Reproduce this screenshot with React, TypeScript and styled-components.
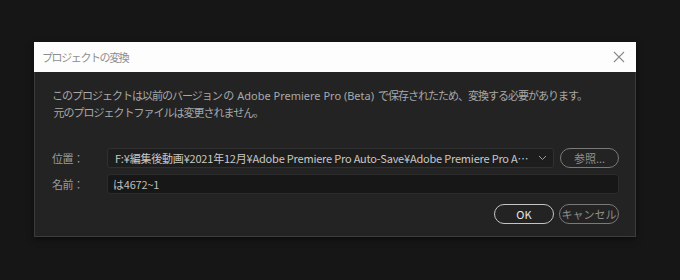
import React from 'react'
import styled, { createGlobalStyle } from 'styled-components'

const GlobalStyle = createGlobalStyle`
  html, body {
    margin: 0;
    padding: 0;
    background: #161616;
  }
  body {
    font-family: "Noto Sans CJK JP", "Noto Sans", sans-serif;
    -webkit-font-smoothing: antialiased;
  }
`

const Screen = styled.div`
  width: 680px;
  height: 280px;
  padding: 42px 0 0 34px;
  box-sizing: border-box;
`

const Dialog = styled.div`
  width: 602px;
  height: 195px;
  box-sizing: border-box;
  display: flex;
  flex-direction: column;
  background: #232323;
  border: 1px solid #3c3c3c;
  border-top: none;
  box-shadow: 0 2px 6px rgba(0, 0, 0, 0.5);
`

const TitleBar = styled.div`
  height: 30px;
  background: #fdfdfd;
  display: flex;
  align-items: center;
  justify-content: space-between;
  padding: 0 10px 0 8px;
  margin: 0 -1px;
`

const Title = styled.span`
  font-size: 11px;
  color: #8e8e8e;
  letter-spacing: -1.4px;
`

const CloseButton = styled.button`
  border: none;
  background: transparent;
  padding: 0;
  width: 14px;
  height: 14px;
  display: flex;
  align-items: center;
  justify-content: center;
`

const Body = styled.div`
  flex: 1;
  display: flex;
  flex-direction: column;
  padding: 15px 16px 0 17px;
`

const Message = styled.p`
  margin: 0;
  font-size: 11px;
  line-height: 16px;
  color: #a8a8a8;
  letter-spacing: -1px;
  white-space: nowrap;
`

const Latin = styled.span`
  font-family: "Noto Sans", sans-serif;
  letter-spacing: 0;
  margin: 0 4px;
`

const Form = styled.div`
  display: grid;
  grid-template-columns: 49px minmax(0, 1fr) 59px;
  column-gap: 6px;
  row-gap: 6px;
  margin-top: 28px;
`

const Label = styled.label`
  font-size: 11px;
  color: #9a9a9a;
  display: flex;
  align-items: center;
  letter-spacing: -0.5px;
`

const Select = styled.div`
  min-width: 0;
  height: 20px;
  box-sizing: border-box;
  background: #1d1d1d;
  border: 1px solid #303030;
  border-radius: 3px;
  display: flex;
  align-items: center;
  padding: 0 6px 0 7px;
  gap: 8px;
`

const FieldText = styled.span<{ $dim?: boolean }>`
  flex: 1;
  min-width: 0;
  font-size: 11px;
  color: ${p => (p.$dim ? '#bdbdbd' : '#c8c8c8')};
  white-space: nowrap;
  overflow: hidden;
  text-overflow: ellipsis;
  letter-spacing: -0.2px;
`

const Input = styled.div`
  grid-column: 2 / 4;
  min-width: 0;
  height: 20px;
  box-sizing: border-box;
  background: #171717;
  border: 1px solid #2c2c2c;
  border-radius: 3px;
  display: flex;
  align-items: center;
  padding: 0 5px;
`

const Pill = styled.button<{ $primary?: boolean }>`
  height: 20px;
  box-sizing: border-box;
  border-radius: 10px;
  border: 1px solid ${p => (p.$primary ? '#c4c4c4' : '#7a7a7a')};
  background: #232323;
  color: ${p => (p.$primary ? '#e6e6e6' : '#8e8e8e')};
  font-family: inherit;
  font-size: 11px;
  padding: 0;
  display: flex;
  align-items: center;
  justify-content: center;
`

const Actions = styled.div`
  display: flex;
  justify-content: flex-end;
  gap: 5px;
  margin-top: 10px;
`

const ActionPill = styled(Pill)`
  width: 60px;
`

const CloseIcon = () => (
  <svg width="12" height="12" viewBox="0 0 12 12">
    <path d="M1 1L11 11M11 1L1 11" stroke="#8a8a8a" strokeWidth="1.1" />
  </svg>
)

const Chevron = () => (
  <svg width="9" height="6" viewBox="0 0 9 6">
    <path d="M1 1L4.5 4.5L8 1" stroke="#9a9a9a" strokeWidth="1" fill="none" />
  </svg>
)

export default function App() {
  return (
    <>
      <GlobalStyle />
      <Screen>
        <Dialog>
          <TitleBar>
            <Title>プロジェクトの変換</Title>
            <CloseButton>
              <CloseIcon />
            </CloseButton>
          </TitleBar>
          <Body>
            <Message>
              このプロジェクトは以前のバージョン の<Latin>Adobe Premiere Pro (Beta)</Latin>で保存されたため、変換する必要があります。
              <br />
              &nbsp;元のプロジェクトファイルは変更されません。
            </Message>
            <Form>
              <Label>位置：</Label>
              <Select>
                <FieldText>F:¥編集後動画¥2021年12月¥Adobe Premiere Pro Auto-Save¥Adobe Premiere Pro Auto-Save¥はじめての編集</FieldText>
                <Chevron />
              </Select>
              <Pill>参照...</Pill>
              <Label>名前：</Label>
              <Input>
                <FieldText $dim>は4672~1</FieldText>
              </Input>
            </Form>
            <Actions>
              <ActionPill $primary>OK</ActionPill>
              <ActionPill>キャンセル</ActionPill>
            </Actions>
          </Body>
        </Dialog>
      </Screen>
    </>
  )
}
